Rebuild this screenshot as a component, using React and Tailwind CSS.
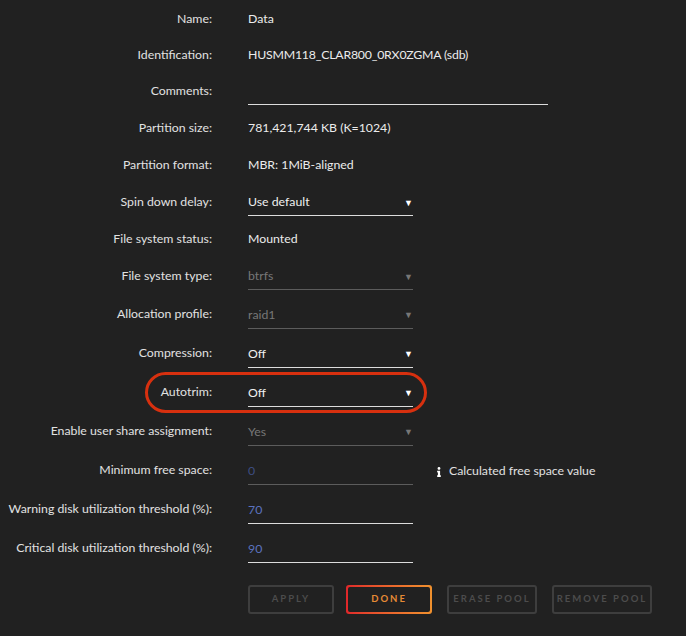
import React from 'react';
import { FaInfo } from 'react-icons/fa';

const font = { fontFamily: 'Lato, "Noto Sans", sans-serif' };

// one label/value line of the pool settings form
const Row = ({ label, h = 'h-9', children }) => (
  <div className={`flex items-center ${h}`}>
    <div className="w-[212px] shrink-0 text-right text-[#e2e2e2]">{label}</div>
    <div className="ml-9 flex items-center">{children}</div>
  </div>
);

const Select = ({ value, disabled }) => (
  <div
    className={`flex h-7 w-[165px] items-center justify-between border-b pt-[2px] ${
      disabled ? 'border-[#5c5c5c] text-[#777]' : 'border-[#dcdcdc] text-[#f0f0f0]'
    }`}
  >
    <span>{value}</span>
    <span className={`text-[9px] ${disabled ? 'text-[#777]' : 'text-white'}`}>▼</span>
  </div>
);

const NumInput = ({ value, dim }) => (
  <div
    className={`flex h-7 w-[165px] items-center border-b pt-[2px] ${
      dim ? 'border-[#5c5c5c] text-[#3d4d80]' : 'border-[#dcdcdc] text-[#5b72bf]'
    }`}
  >
    {value}
  </div>
);

const Button = ({ children, w }) => (
  <button
    className={`${w} h-[29px] whitespace-nowrap rounded-[3px] border-2 border-[#3e3e3e] text-[9.5px] font-bold tracking-[2px] text-[#4c4c4c]`}
  >
    {children}
  </button>
);

export default function App() {
  return (
    <div className="min-h-screen bg-[#212121] pt-[1px] text-[12.3px]" style={font}>
      <Row label="Name:">
        <span className="text-[#ececec]">Data</span>
      </Row>
      <Row label="Identification:">
        <span className="tracking-[-0.2px] text-[#ececec]">HUSMM118_CLAR800_0RX0ZGMA (sdb)</span>
      </Row>
      <Row label="Comments:">
        <div className="h-7 w-[300px] border-b border-[#dcdcdc]" />
      </Row>
      <Row label="Partition size:" h="h-[38px]">
        <span className="text-[#ececec]">781,421,744 KB (K=1024)</span>
      </Row>
      <Row label="Partition format:">
        <span className="text-[#ececec]">MBR: 1MiB-aligned</span>
      </Row>
      <Row label="Spin down delay:" h="h-[38px]">
        <Select value="Use default" />
      </Row>
      <Row label="File system status:">
        <span className="text-[#ececec]">Mounted</span>
      </Row>
      <Row label="File system type:" h="h-[38px]">
        <Select value="btrfs" disabled />
      </Row>
      <Row label="Allocation profile:" h="h-[39px]">
        <Select value="raid1" disabled />
      </Row>
      <Row label="Compression:" h="h-[39px]">
        <Select value="Off" />
      </Row>
      <div className="relative">
        <Row label="Autotrim:" h="h-[39px]">
          <Select value="Off" />
        </Row>
        {/* highlight ring around the autotrim setting */}
        <div className="pointer-events-none absolute left-[145px] top-[-1px] h-[41px] w-[282px] rounded-full border-[3px] border-[#d7300f]" />
      </div>
      <Row label="Enable user share assignment:" h="h-[39px]">
        <Select value="Yes" disabled />
      </Row>
      <Row label="Minimum free space:" h="h-[39px]">
        <NumInput value="0" dim />
        <div className="ml-[21px] flex items-center pt-[2px] text-[#e2e2e2]">
          <FaInfo className="mr-[5px] text-[10px] text-white" />
          Calculated free space value
        </div>
      </Row>
      <Row label="Warning disk utilization threshold (%):" h="h-[39px]">
        <NumInput value="70" />
      </Row>
      <Row label="Critical disk utilization threshold (%):" h="h-[39px]">
        <NumInput value="90" />
      </Row>
      <div className="ml-[248px] mt-[17px] flex gap-3">
        <Button w="w-[86px]">APPLY</Button>
        <div className="h-[29px] w-[86px] rounded-[3px] bg-gradient-to-r from-[#e0262a] to-[#f0912e] p-[2px]">
          <div className="flex h-full items-center justify-center rounded-[2px] bg-[#212121] text-[9.5px] font-bold tracking-[2px] text-[#e68a35]">
            DONE
          </div>
        </div>
        <Button w="ml-[3px] w-[90px]">ERASE POOL</Button>
        <Button w="ml-[3px] w-[100px]">REMOVE POOL</Button>
      </div>
    </div>
  );
}
